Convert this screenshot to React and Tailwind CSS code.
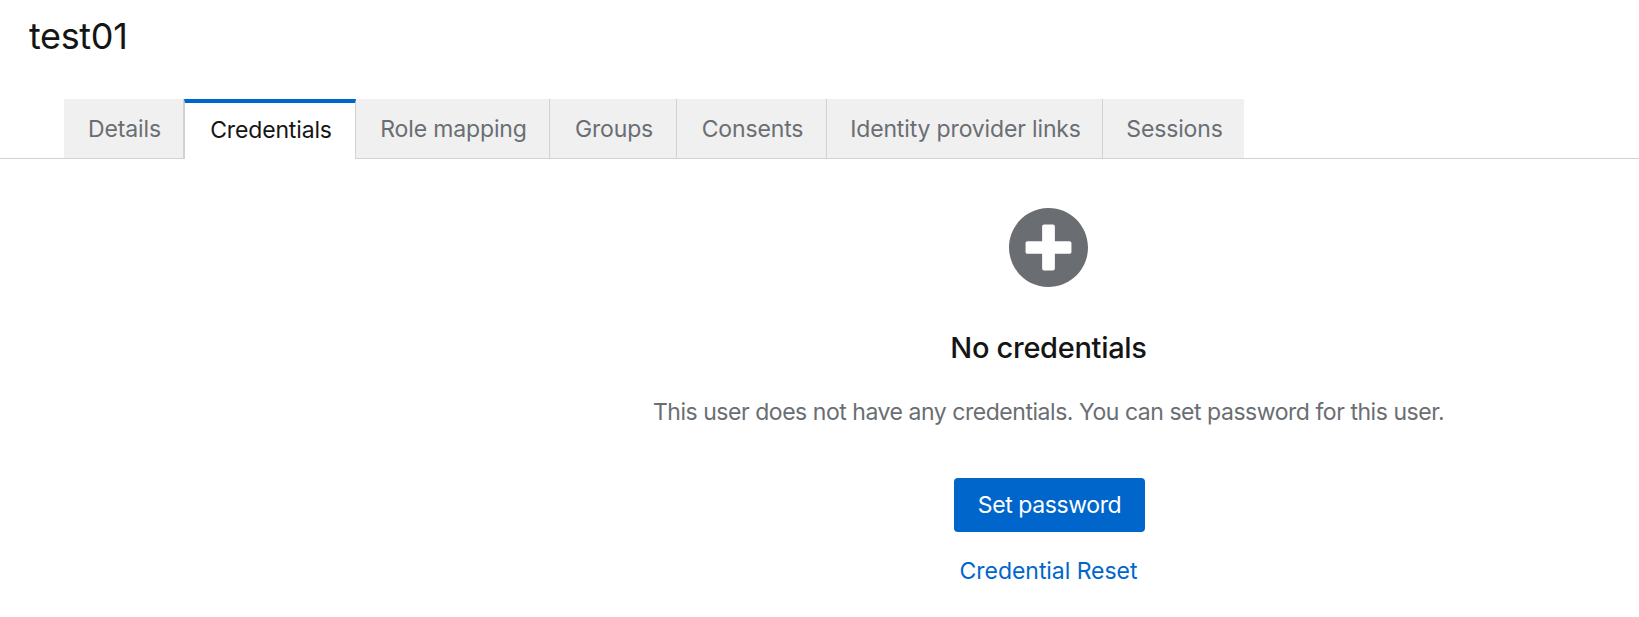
import React from 'react';

const tabs = [
  { label: 'Details', width: 'w-[120px]' },
  { label: 'Credentials', active: true },
  { label: 'Role mapping', width: 'w-[194px]' },
  { label: 'Groups', width: 'w-[127px]' },
  { label: 'Consents', width: 'w-[150px]' },
  { label: 'Identity provider links', width: 'w-[276px]' },
  { label: 'Sessions', width: 'w-[141px]' },
];

const App = () => {
  return (
    <div className="h-[617px] bg-white font-['Inter',sans-serif] text-[#151515] overflow-hidden">
      <h1 className="pl-[29px] pt-[12px] h-[99px] text-[36px] leading-[48px] font-normal tracking-[-0.35px]">test01</h1>

      <div className="flex h-[60px] pl-[64px] border-b border-[#d2d2d2]">
        {tabs.map((tab) => (
          <div
            key={tab.label}
            className={
              tab.active
                ? 'flex items-center justify-center h-[60px] w-[172px] pb-[2px] pl-[2px] bg-white border-t-4 border-t-[#0066cc] border-r border-r-[#d2d2d2] border-l border-l-[#d2d2d2] text-[23px] tracking-[-0.15px] text-[#151515]'
                : `flex items-center justify-center h-[59px] pt-[2px] pl-[2px] ${tab.width} bg-[#f0f0f0] border-r border-r-[#d2d2d2] last:border-r-0 text-[23px] tracking-[-0.15px] text-[#6a6e73]`
            }
          >
            {tab.label}
          </div>
        ))}
      </div>

      <div className="ml-[458px] flex flex-col items-center pt-[49px]">
        <svg className="w-[79px] h-[79px]" viewBox="8 8 496 496" fill="#6a6e73">
          <path d="M256 8C119 8 8 119 8 256s111 248 248 248 248-111 248-248S393 8 256 8zm144 276c0 6.600-5.400 12-12 12h-92v92c0 6.600-5.400 12-12 12h-56c-6.600 0-12-5.400-12-12v-92h-92c-6.600 0-12-5.400-12-12v-56c0-6.600 5.400-12 12-12h92v-92c0-6.600 5.400-12 12-12h56c6.600 0 12 5.400 12 12v92h92c6.600 0 12 5.400 12 12v56z" />
        </svg>
        <h2 className="mt-[42px] text-[29px] leading-[38px] font-medium tracking-[-0.3px] text-[#151515]">No credentials</h2>
        <p className="mt-[27px] text-[23px] leading-[36px] tracking-[-0.46px] text-[#6a6e73]">
          This user does not have any credentials. You can set password for this user.
        </p>
        <button className="mt-[48px] ml-[2px] w-[191px] h-[54px] rounded-[4px] bg-[#0066cc] text-white text-[23px] tracking-[-0.4px]">
          Set password
        </button>
        <a className="mt-[21px] text-[23px] leading-[36px] tracking-[-0.05px] text-[#0066cc]">Credential Reset</a>
      </div>
    </div>
  );
};

export default App;
